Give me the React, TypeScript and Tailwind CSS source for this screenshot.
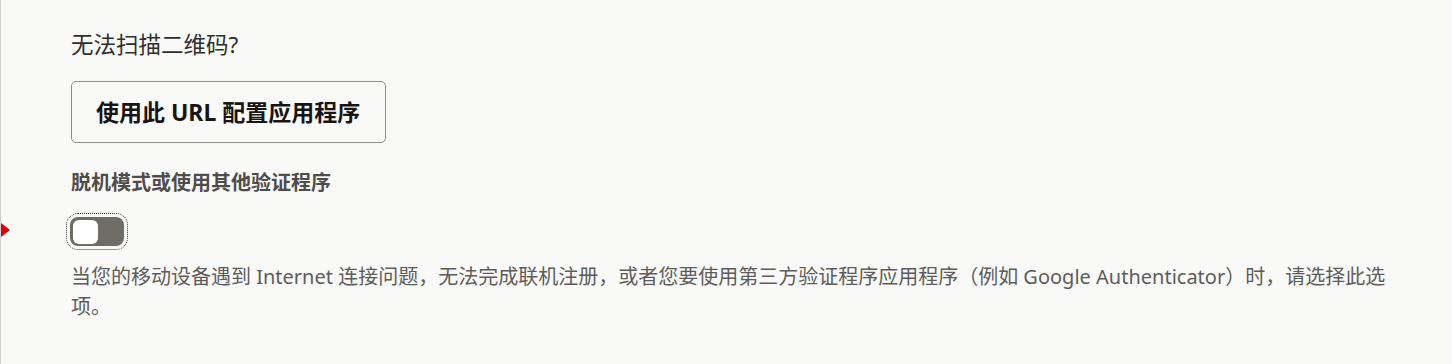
import { useState } from "react";

const FONT = "font-['Noto_Sans','Noto_Sans_CJK_SC',sans-serif]";

function Toggle() {
  const [on, setOn] = useState(false);
  return (
    <button
      type="button"
      role="switch"
      aria-checked={on}
      onClick={() => setOn((v) => !v)}
      className="ml-[-5px] flex h-[37px] w-[62px] items-center rounded-[12px] border border-dotted border-[#3a3a3a] p-[3px]"
    >
      <span
        className={`flex h-full w-full items-center rounded-[8px] bg-[#6f6b67] px-[3px] ${
          on ? "justify-end" : "justify-start"
        }`}
      >
        <span className="h-[24px] w-[25px] rounded-[6px] bg-white" />
      </span>
    </button>
  );
}

export default function App() {
  return (
    <div className={`relative min-h-[364px] w-full border-l border-[#d2d2d2] bg-[#f9f9f8] ${FONT}`}>
      <span className="absolute left-0 top-[223px] h-0 w-0 border-y-[7px] border-l-[9px] border-y-transparent border-l-[#e00000]" />
      <div className="pl-[70px] pt-[30px]">
        <h2 className="text-[22.5px] leading-[30px] text-[#2f2e2c]">无法扫描二维码?</h2>
        <button
          type="button"
          className="mt-[21px] h-[62px] w-[315px] rounded-[5px] border border-[#8c8a88] pl-[24px] text-left text-[23px] font-bold text-[#161513]"
        >
          使用此 URL 配置应用程序
        </button>
        <div className="mt-[26px] text-[20px] font-bold leading-[28px] text-[#4f4c49]">
          脱机模式或使用其他验证程序
        </div>
        <div className="mt-[16px]">
          <Toggle />
        </div>
        <p className="mt-[12px] w-[1330px] text-[20px] leading-[30px] text-[#5e5c59]">
          当您的移动设备遇到 Internet 连接问题，无法完成联机注册，或者您要使用第三方验证程序应用程序（例如 Google Authenticator）时，请选择此选项。
        </p>
      </div>
    </div>
  );
}
